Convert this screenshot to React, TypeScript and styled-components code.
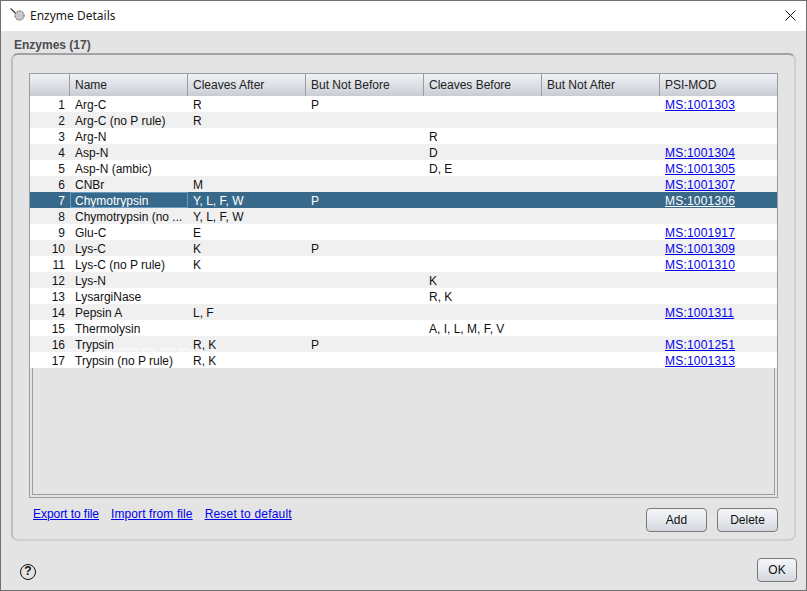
import styled, { createGlobalStyle } from "styled-components"

type Enzyme = {
  name: string;
  after?: string;
  notBefore?: string;
  before?: string;
  notAfter?: string;
  mod?: string;
}

const enzymes: Enzyme[] = [
  { name: "Arg-C", after: "R", notBefore: "P", mod: "MS:1001303" },
  { name: "Arg-C (no P rule)", after: "R" },
  { name: "Arg-N", before: "R" },
  { name: "Asp-N", before: "D", mod: "MS:1001304" },
  { name: "Asp-N (ambic)", before: "D, E", mod: "MS:1001305" },
  { name: "CNBr", after: "M", mod: "MS:1001307" },
  { name: "Chymotrypsin", after: "Y, L, F, W", notBefore: "P", mod: "MS:1001306" },
  { name: "Chymotrypsin (no ...", after: "Y, L, F, W" },
  { name: "Glu-C", after: "E", mod: "MS:1001917" },
  { name: "Lys-C", after: "K", notBefore: "P", mod: "MS:1001309" },
  { name: "Lys-C (no P rule)", after: "K", mod: "MS:1001310" },
  { name: "Lys-N", before: "K" },
  { name: "LysargiNase", before: "R, K" },
  { name: "Pepsin A", after: "L, F", mod: "MS:1001311" },
  { name: "Thermolysin", before: "A, I, L, M, F, V" },
  { name: "Trypsin", after: "R, K", notBefore: "P", mod: "MS:1001251" },
  { name: "Trypsin (no P rule)", after: "R, K", mod: "MS:1001313" },
]

const headers = ["", "Name", "Cleaves After", "But Not Before", "Cleaves Before", "But Not After", "PSI-MOD"]
const SELECTED = 6

const App = () => {
  return (
    <>
      <GlobalStyle />
      <Window>
        <TitleBar>
          <AppIcon viewBox="0 0 16 16">
            <path d="M0.5 0.5 L6 5.5" stroke="#333" strokeWidth="1.1" fill="none" />
            <circle cx="9.5" cy="7.5" r="4.6" fill="#c9c9c9" stroke="#555" strokeWidth="1" strokeDasharray="2 1" />
          </AppIcon>
          <Title>Enzyme Details</Title>
          <CloseIcon viewBox="0 0 11 11">
            <path d="M0.5 0.5 L10.5 10.5 M10.5 0.5 L0.5 10.5" stroke="#111" strokeWidth="1" fill="none" />
          </CloseIcon>
        </TitleBar>

        <Content>
          <Legend>Enzymes (17)</Legend>
          <Panel>
            <TableFrame>
              <HeaderRow>
                {headers.map((h, i) => <HeaderCell key={i}>{h}</HeaderCell>)}
              </HeaderRow>
              {enzymes.map((e, i) => (
                <Row key={e.name} $even={i % 2 === 1} $selected={i === SELECTED}>
                  <IndexCell>{i + 1}</IndexCell>
                  <Cell $focus={i === SELECTED}>{e.name}</Cell>
                  <Cell>{e.after}</Cell>
                  <Cell>{e.notBefore}</Cell>
                  <Cell>{e.before}</Cell>
                  <Cell>{e.notAfter}</Cell>
                  <Cell>{e.mod && <ModLink $selected={i === SELECTED}>{e.mod}</ModLink>}</Cell>
                </Row>
              ))}
              <EmptyViewport />
              <Watermark>SOFTPEDIA</Watermark>
            </TableFrame>

            <PanelFooter>
              <Links>
                <TextLink>Export to file</TextLink>
                <TextLink>Import from file</TextLink>
                <TextLink>Reset to default</TextLink>
              </Links>
              <Buttons>
                <Button>Add</Button>
                <Button>Delete</Button>
              </Buttons>
            </PanelFooter>
          </Panel>
        </Content>

        <BottomBar>
          <HelpIcon>?</HelpIcon>
          <OkButton>OK</OkButton>
        </BottomBar>
      </Window>
    </>
  )
}

const GlobalStyle = createGlobalStyle`
  html, body {
    margin: 0;
    padding: 0;
    background: #e4e4e4;
  }
  * {
    box-sizing: border-box;
  }
`

const Window = styled.div`
  position: relative;
  width: 807px;
  height: 591px;
  display: flex;
  flex-direction: column;
  border: 1px solid #6f6f6f;
  background: #e4e4e4;
  font-family: "Liberation Sans", Arial, sans-serif;
  font-size: 12px;
  color: #111;
  overflow: hidden;
`

const TitleBar = styled.div`
  height: 30px;
  flex: none;
  display: flex;
  align-items: center;
  padding: 0 10px 0 9px;
  background: #fff;
`

const AppIcon = styled.svg`
  width: 16px;
  height: 16px;
  flex: none;
`

const Title = styled.div`
  margin: 0 0 2px 4px;
  font-family: "Noto Sans", sans-serif;
  font-size: 12px;
  color: #1a1a1a;
`

const CloseIcon = styled.svg`
  width: 11px;
  height: 11px;
  margin: 0 0 1px auto;
`

const Content = styled.div`
  flex: none;
  padding: 0 10px;
`

const Legend = styled.div`
  height: 22px;
  padding: 7px 0 0 3px;
  font-weight: bold;
  font-size: 12px;
  line-height: 15px;
  color: #4c4c52;
`

const Panel = styled.div`
  height: 488px;
  padding: 18px 16px 0;
  border: 2px solid;
  border-color: #a2a2a6 #d0d0d0 #cfcfcf #bdbdbd;
  border-radius: 7px;
  background: #e4e4e4;
`

const TableFrame = styled.div`
  position: relative;
  height: 425px;
  display: flex;
  flex-direction: column;
  border: 1px solid #9b9ba1;
  background: #e4e4e4;
`

const HeaderRow = styled.div`
  flex: none;
  height: 22px;
  display: grid;
  grid-template-columns: 40px repeat(5, 118px) 117px;
  background: linear-gradient(#eef1f5, #dfe2e7 45%, #c9ccd3);
`

const HeaderCell = styled.div`
  padding-left: 5px;
  line-height: 22px;
  color: #222;
  border-right: 1px solid #9b9ba1;
  &:last-child {
    border-right: none;
  }
`

const Row = styled.div<{ $even: boolean; $selected: boolean }>`
  flex: none;
  height: 16px;
  display: grid;
  grid-template-columns: 40px repeat(5, 118px) 117px;
  line-height: 18px;
  background: ${(p) => (p.$selected ? "#39698a" : p.$even ? "#f0f0f0" : "#fff")};
  color: ${(p) => (p.$selected ? "#fff" : "#111")};
`

// cells sit above the watermark, row backgrounds below it
const Cell = styled.div<{ $focus?: boolean }>`
  position: relative;
  z-index: 2;
  height: 16px;
  padding-left: 5px;
  white-space: nowrap;
  overflow: hidden;
  ${(p) => p.$focus && `
    border: 1px solid #6a9ac0;
    padding-left: 4px;
    line-height: 16px;
  `}
`

const IndexCell = styled.div`
  position: relative;
  z-index: 2;
  height: 16px;
  padding-right: 5px;
  text-align: right;
  overflow: hidden;
`

const EmptyViewport = styled.div`
  flex: 1;
  margin: 0 2px 2px;
  border: 1px solid #9b9ba1;
  border-top: none;
`

const Watermark = styled.div`
  position: absolute;
  z-index: 1;
  left: 34px;
  top: 268px;
  font-size: 29px;
  line-height: 32px;
  letter-spacing: -0.5px;
  color: rgba(255, 255, 255, 0.55);
  pointer-events: none;
`

const PanelFooter = styled.div`
  display: flex;
  justify-content: space-between;
  align-items: flex-start;
  padding-top: 10px;
`

const Links = styled.div`
  display: flex;
  gap: 12px;
  padding-left: 4px;
  line-height: 13px;
  letter-spacing: 0.1px;
  span:first-child {
    letter-spacing: -0.05px;
  }
  span:last-child {
    letter-spacing: 0.2px;
  }
`

const TextLink = styled.span<{ $selected?: boolean }>`
  color: ${(p) => (p.$selected ? "#fff" : "#0000ee")};
  text-decoration: underline;
  cursor: pointer;
`

const ModLink = styled(TextLink)`
  letter-spacing: 0.2px;
`

const Buttons = styled.div`
  display: flex;
  gap: 10px;
`

const Button = styled.button`
  width: 61px;
  height: 24px;
  padding: 0;
  border: 1px solid #7a7a7a;
  border-radius: 4px;
  background: linear-gradient(#f4f6f9, #e6e9ee 50%, #d3d6dc);
  font-family: "Liberation Sans", Arial, sans-serif;
  font-size: 12px;
  color: #111;
`

const BottomBar = styled.div`
  flex: 1;
  display: flex;
  align-items: center;
  justify-content: space-between;
  padding: 9px 9px 0 19px;
`

const HelpIcon = styled.div`
  width: 16px;
  height: 16px;
  margin-top: 4px;
  border: 1.5px solid #111;
  border-radius: 50%;
  text-align: center;
  font-size: 12px;
  font-weight: bold;
  line-height: 13px;
`

const OkButton = styled(Button)`
  width: 40px;
`

export default App
